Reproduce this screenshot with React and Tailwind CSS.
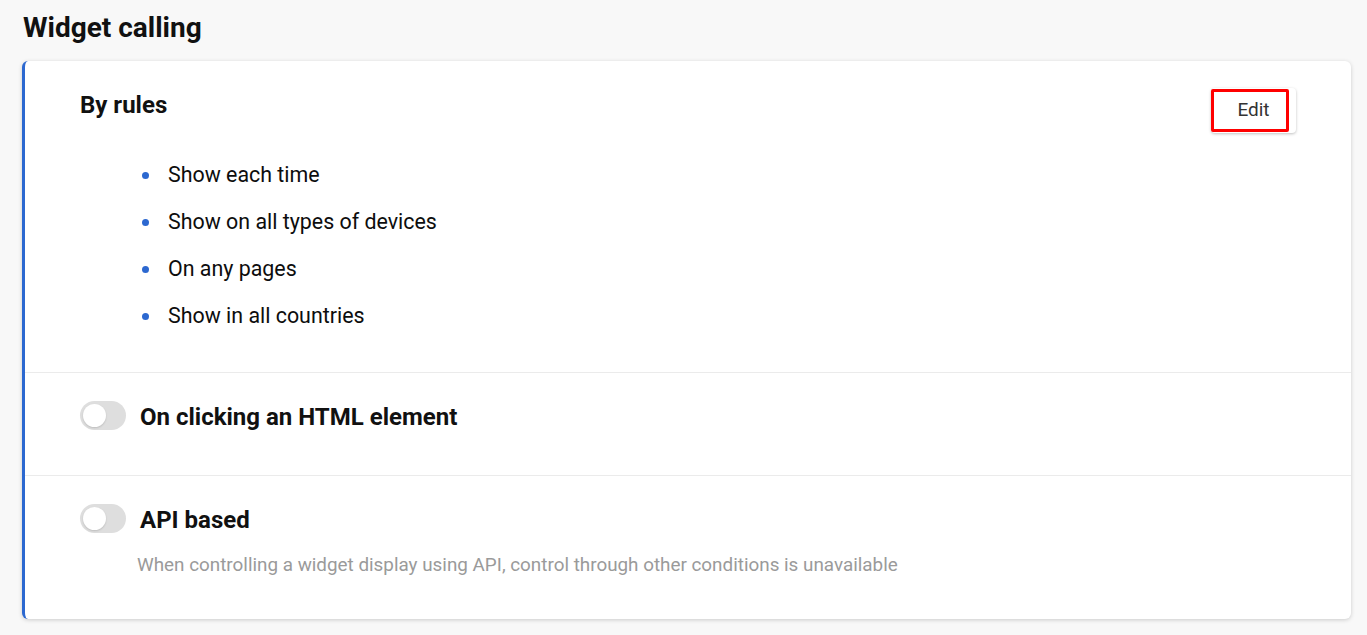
const rules = [
  "Show each time",
  "Show on all types of devices",
  "On any pages",
  "Show in all countries",
];

const Toggle = () => (
  <div className="relative w-[46px] h-[29px] rounded-full bg-[#dedede] shrink-0">
    <div className="absolute left-[3px] top-[3px] w-[23px] h-[23px] rounded-full bg-white shadow-[0_1px_2px_rgba(0,0,0,0.15)]" />
  </div>
);

export default function App() {
  return (
    <div
      className="min-h-screen bg-[#f8f8f8] pl-[22px] pr-[16px] pt-[11px] pb-4 text-[#111]"
      style={{ fontFamily: "Roboto, 'Noto Sans', sans-serif" }}
    >
      <h1 className="text-[28px] font-bold leading-[33px] pl-[1px] mb-[17px]">Widget calling</h1>

      <div className="bg-white rounded-[6px] border-l-[3px] border-[#2c68d0] shadow-[0_1px_4px_rgba(0,0,0,0.18)]">
        {/* by rules */}
        <div className="pl-[55px] pr-[55px] pt-[27px] pb-[32px] border-b border-[#ebebeb]">
          <div className="flex justify-between items-start">
            <h2 className="mt-[3px] text-[24px] font-bold leading-[28px]">By rules</h2>
            <button className="relative w-[85px] h-[45px] rounded-[4px] bg-white shadow-[0_1px_3px_rgba(0,0,0,0.25)] text-[19px] text-[#333]">
              <span className="absolute left-0 top-[1px] w-[78px] h-[43px] border-[3px] border-[#ff0000] rounded-[2px]" />
              <span className="relative">Edit</span>
            </button>
          </div>
          <ul className="mt-[19px] ml-[62px]">
            {rules.map((r) => (
              <li key={r} className="h-[47px] flex items-center text-[21.4px] text-[#0d0d0d]">
                <span className="w-[7px] h-[7px] rounded-full bg-[#2c68d0] mr-[19px]" />
                {r}
              </li>
            ))}
          </ul>
        </div>

        {/* html element */}
        <div className="pl-[55px] pt-[28px] h-[103px] border-b border-[#ebebeb]">
          <div className="flex items-start gap-[14px]">
            <Toggle />
            <span className="text-[24px] font-bold leading-[29px] mt-[2px]">On clicking an HTML element</span>
          </div>
        </div>

        {/* api */}
        <div className="pl-[55px] pt-[28px] pb-[43px]">
          <div className="flex items-start gap-[14px]">
            <Toggle />
            <span className="text-[24px] font-bold leading-[29px] mt-[2px]">API based</span>
          </div>
          <p className="mt-[19px] ml-[57px] text-[18.85px] leading-[22px] text-[#9a9a9a]">
            When controlling a widget display using API, control through other conditions is unavailable
          </p>
        </div>
      </div>
    </div>
  );
}
